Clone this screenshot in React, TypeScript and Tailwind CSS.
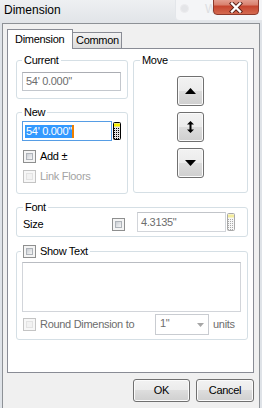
import React from 'react';

type BoxProps = { legend: React.ReactNode; className?: string; legendClass?: string; children: React.ReactNode };

const GroupBox = ({ legend, className = '', legendClass = 'ml-[5px]', children }: BoxProps) => (
  <fieldset className={`min-w-0 border border-[#d5dfe5] rounded-[3px] ${className}`}>
    <legend className={`px-[2px] leading-[13px] ${legendClass}`}>{legend}</legend>
    {children}
  </fieldset>
);

const Check = ({ disabled = false }: { disabled?: boolean }) => (
  <span
    className={`block w-[13px] h-[13px] shrink-0 border p-[2px] ${
      disabled ? 'border-[#c4c4c4] bg-[#f7f7f7]' : 'border-[#8e8f8f] bg-[#f4f4f4]'
    }`}
  >
    <span
      className={`block w-full h-full border ${
        disabled
          ? 'border-[#e3e3e3] bg-[#f2f2f2]'
          : 'border-[#aeb3b9] bg-[linear-gradient(135deg,#c9cdd3,#f6f6f6)]'
      }`}
    />
  </span>
);

const Calc = ({ disabled = false }: { disabled?: boolean }) => {
  const ink = disabled ? '#a9a9a9' : '#000';
  const dots: React.ReactNode[] = [];
  for (let r = 0; r < 6; r++) {
    for (let c = 0; c < 3; c++) {
      dots.push(<rect key={`${r}-${c}`} x={1 + c * 2} y={6 + r * 2} width="1" height="1" fill={ink} />);
    }
  }
  return (
    <svg width="8" height="18" viewBox="0 0 8 18" className="shrink-0">
      <rect x="0.5" y="0.5" width="7" height="17" rx="1" fill={disabled ? '#f7f7f7' : '#e2e2e2'} stroke={ink} />
      <rect x="1" y="1.5" width="6" height="3" fill={disabled ? '#f4ec9c' : '#f8f000'} />
      {dots}
    </svg>
  );
};

const winBtn =
  'border border-[#707070] rounded-[3px] bg-[linear-gradient(#f2f2f2_0%,#ebebeb_50%,#dddddd_50%,#cfcfcf_100%)] shadow-[inset_0_0_0_1px_#fbfbfb] flex items-center justify-center';

const Field = ({ className = '', children }: { className?: string; children?: React.ReactNode }) => (
  <div className={`border border-[#c3c7cd] border-t-[#abadb3] bg-white flex items-center pl-[2px] ${className}`}>
    {children}
  </div>
);

export default function App() {
  return (
    <div className="relative w-[262px] h-[408px] overflow-hidden bg-[#dfe3e8] text-black text-[11px] leading-[13px] tracking-[-0.3px] font-['Liberation_Sans',Arial,sans-serif]">
      {/* title bar */}
      <div className="relative h-[23px] flex items-center pl-[4px] pb-[2px] bg-gradient-to-b from-[#eef0f2] to-[#e1e4e8]">
        <span className="text-[12px] leading-[15px] tracking-normal">Dimension</span>
        <div className="absolute left-[175px] top-[-4px] w-[100px] h-[25px] rounded-[4px] border border-[#e3e6ea] bg-[#f4f5f7]">
          <span className="absolute left-[4px] top-[7px] w-[9px] h-[9px] rounded-full bg-[#e4e5e8] border border-[#ececee]" />
          <span className="absolute left-[29px] top-[5px] text-[12px] leading-[15px] tracking-normal text-[#dcdee2]">Window S</span>
        </div>
        <div className="absolute left-[213px] top-[-4px] w-[46px] h-[19px] rounded-b-[4px] border border-[#8e3a2c] bg-[linear-gradient(#eab0a4_0%,#d9826f_45%,#c6462f_55%,#d46a50_100%)] flex items-center justify-center pt-[4px]">
          <svg width="14" height="11" viewBox="0 0 14 11">
            <path d="M3 1.5 L11 9.5 M11 1.5 L3 9.5" stroke="#5b2118" strokeWidth="4.2" strokeLinecap="square" />
            <path d="M3 1.5 L11 9.5 M11 1.5 L3 9.5" stroke="#ffffff" strokeWidth="2.4" strokeLinecap="square" />
          </svg>
        </div>
      </div>

      {/* client area */}
      <div className="mx-[2px] h-[385px] border border-b-0 border-[#8d9196] bg-[#f0f0f0] pl-[4px] pt-[5px]">
        {/* tabs */}
        <div className="flex items-end h-[19px]">
          <div className="relative z-10 -mb-px h-[20px] w-[66px] border border-b-0 border-[#898c95] bg-white pl-[7px] pt-[3px]">
            Dimension
          </div>
          <div className="-ml-px h-[16px] w-[50px] border border-b-0 border-[#898c95] bg-gradient-to-b from-[#f3f3f3] to-[#dcdcdc] pl-[3px] pt-[1px]">
            Common
          </div>
        </div>

        {/* tab page */}
        <div className="w-[247px] h-[325px] border border-[#898c95] bg-white pl-[8px] pr-[5px] pt-[5px]">
          <div className="flex items-start gap-[5px]">
            <div className="flex flex-col gap-[7px] w-[112px]">
              <GroupBox legend="Current">
                <div className="pl-[5px] pt-[5px] pb-[7px]">
                  <Field className="w-[99px] h-[19px] text-[#6d6d6d]">
                    <span className="pl-[1px]">54' 0.000"</span>
                  </Field>
                </div>
              </GroupBox>

              <GroupBox legend="New">
                <div className="pl-[5px] pt-[2px] pb-[10px]">
                  <div className="flex items-center gap-[1px]">
                    <div className="w-[90px] h-[20px] border border-[#569de5] bg-white flex items-center pl-[2px]">
                      <span className="bg-[#3399ff] text-white pl-[1px]">54' 0.000"</span>
                      <span className="w-[2px] h-[13px] bg-[#f08000]" />
                    </div>
                    <Calc />
                  </div>
                  <div className="mt-[9px] ml-[1px] flex items-center gap-[4px]">
                    <Check />
                    <span>Add ±</span>
                  </div>
                  <div className="mt-[7px] ml-[1px] flex items-center gap-[4px]">
                    <Check disabled />
                    <span className="text-[#a3a3a3]">Link Floors</span>
                  </div>
                </div>
              </GroupBox>
            </div>

            <GroupBox legend="Move" className="w-[115px]" legendClass="ml-[6px]">
              <div className="flex flex-col items-center gap-[6px] pt-[9px] pb-[14px]">
                <div className={`${winBtn} w-[27px] h-[30px]`}>
                  <svg width="11" height="6" viewBox="0 0 11 6">
                    <polygon points="0,6 5.5,0 11,6" fill="#000" />
                  </svg>
                </div>
                <div className={`${winBtn} w-[27px] h-[30px]`}>
                  <svg width="7" height="12" viewBox="0 0 7 12">
                    <polygon points="0,3.5 3.5,0 7,3.5" fill="#000" />
                    <rect x="2.5" y="3" width="2" height="6" fill="#000" />
                    <polygon points="0,8.5 3.5,12 7,8.5" fill="#000" />
                  </svg>
                </div>
                <div className={`${winBtn} w-[27px] h-[30px]`}>
                  <svg width="11" height="6" viewBox="0 0 11 6">
                    <polygon points="0,0 5.5,6 11,0" fill="#000" />
                  </svg>
                </div>
              </div>
            </GroupBox>
          </div>

          <GroupBox legend="Font" className="mt-[7px]" legendClass="ml-[6px]">
            <div className="-mt-[2px] pl-[6px] pb-[4px] flex items-start">
              <span className="w-[89px] mt-[6px]">Size</span>
              <span className="mt-[6px]">
                <Check />
              </span>
              <Field className="ml-[12px] w-[89px] h-[20px] text-[#6d6d6d] border-[#d2d5da] border-t-[#c1c4c9]">
                <span className="pl-[1px]">4.3135"</span>
              </Field>
              <span className="ml-[1px] mt-[1px]">
                <Calc disabled />
              </span>
            </div>
          </GroupBox>

          <GroupBox
            className="mt-[8px]"
            legendClass="ml-[4px]"
            legend={
              <span className="flex items-center gap-[4px]">
                <Check />
                <span>Show Text</span>
              </span>
            }
          >
            <div className="pl-[5px] pt-[4px] pb-[4px]">
              <div className="w-[219px] h-[50px] border border-[#d2d5da] border-t-[#b9bcc2] bg-white" />
              <div className="mt-[2px] flex items-center">
                <span className="ml-[1px]">
                  <Check disabled />
                </span>
                <span className="ml-[4px] w-[115px] text-[#6d6d6d]">Round Dimension to</span>
                <div className="w-[54px] h-[21px] border border-[#c9ccd1] bg-white flex items-start justify-between pl-[4px] pr-[4px] pt-[2px] text-[#6d6d6d]">
                  <span>1"</span>
                  <svg width="7" height="4" viewBox="0 0 7 4" className="mt-[6px]">
                    <polygon points="0,0 7,0 3.5,4" fill="#a6a6a6" />
                  </svg>
                </div>
                <span className="ml-[4px] text-[#6d6d6d]">units</span>
              </div>
            </div>
          </GroupBox>
        </div>

        {/* dialog buttons */}
        <div className="w-[247px] mt-[6px] flex justify-end gap-[6px]">
          <div className={`${winBtn} w-[57px] h-[23px]`}>OK</div>
          <div className={`${winBtn} w-[58px] h-[23px]`}>Cancel</div>
        </div>
      </div>
    </div>
  );
}
